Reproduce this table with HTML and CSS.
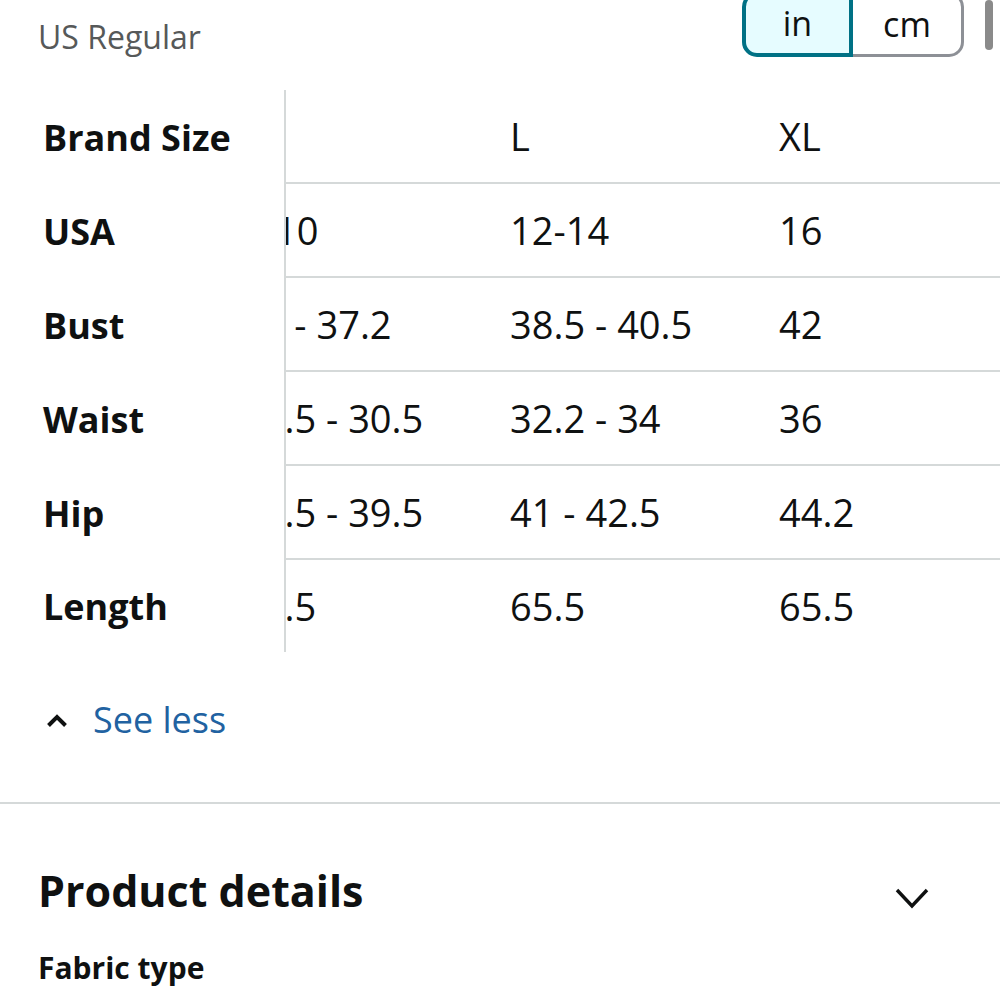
FILE: index.html
```html
<!DOCTYPE html>
<html lang="en">
  <head>
    <meta charset="UTF-8" />
    <meta name="viewport" content="width=device-width, initial-scale=1.0" />
    <title>Size chart</title>
    <link rel="stylesheet" href="styles.css">
  </head>
  <body>
    <div class="unit-bar">
      <span class="unit-label">US Regular</span>
      <div class="unit-toggle">
        <span class="unit selected">in</span>
        <span class="unit">cm</span>
      </div>
      <span class="scroll-thumb"></span>
    </div>

    <div class="size-table">
      <div class="size-row">
        <div class="size-label">Brand Size</div>
        <div class="size-values">
          <div class="size-track">
            <span class="size-cell">M</span>
            <span class="size-cell">L</span>
            <span class="size-cell">XL</span>
          </div>
        </div>
      </div>
      <div class="size-row">
        <div class="size-label">USA</div>
        <div class="size-values">
          <div class="size-track">
            <span class="size-cell">8-10</span>
            <span class="size-cell">12-14</span>
            <span class="size-cell">16</span>
          </div>
        </div>
      </div>
      <div class="size-row">
        <div class="size-label">Bust</div>
        <div class="size-values">
          <div class="size-track">
            <span class="size-cell">36 - 37.2</span>
            <span class="size-cell">38.5 - 40.5</span>
            <span class="size-cell">42</span>
          </div>
        </div>
      </div>
      <div class="size-row">
        <div class="size-label">Waist</div>
        <div class="size-values">
          <div class="size-track">
            <span class="size-cell">28.5 - 30.5</span>
            <span class="size-cell">32.2 - 34</span>
            <span class="size-cell">36</span>
          </div>
        </div>
      </div>
      <div class="size-row">
        <div class="size-label">Hip</div>
        <div class="size-values">
          <div class="size-track">
            <span class="size-cell">37.5 - 39.5</span>
            <span class="size-cell">41 - 42.5</span>
            <span class="size-cell">44.2</span>
          </div>
        </div>
      </div>
      <div class="size-row">
        <div class="size-label">Length</div>
        <div class="size-values">
          <div class="size-track">
            <span class="size-cell">64.5</span>
            <span class="size-cell">65.5</span>
            <span class="size-cell">65.5</span>
          </div>
        </div>
      </div>
    </div>

    <div class="see-less">
      <a class="see-less-link" href="#">
        <svg class="chevron-up" width="20" height="16" viewBox="0 0 20 16">
          <path d="M1.5 13.5 L10 5 L18.5 13.5" fill="none" stroke="#0f1111" stroke-width="4" />
        </svg>
        <span>See less</span>
      </a>
    </div>

    <div class="details">
      <div class="details-head">
        <h2>Product details</h2>
        <svg class="chevron-down" width="36" height="24" viewBox="0 0 36 24">
          <path d="M3 4 L18 20 L33 4" fill="none" stroke="#0f1111" stroke-width="3.4" />
        </svg>
      </div>
      <h3>Fabric type</h3>
    </div>
  </body>
</html>
```

FILE: styles.css
```css
body {
  margin: 0;
  padding: 0;
  background: #fff;
  color: #0f1111;
  font-family: "Open Sans", sans-serif;
  overflow: hidden;
}

.unit-bar {
  display: flex;
  align-items: flex-start;
  height: 90px;
  padding-left: 38px;
}

.unit-label {
  margin-top: 17px;
  font-size: 32px;
  line-height: 40px;
  color: #565959;
  flex: 1;
}

.unit-toggle {
  display: flex;
  margin-top: -8px;
  height: 65px;
}

.unit {
  width: 111px;
  box-sizing: border-box;
  display: flex;
  align-items: center;
  justify-content: center;
  font-size: 34px;
  border: 3px solid #8d9096;
  border-left: none;
  border-radius: 0 15px 15px 0;
  padding-bottom: 2px;
}

.unit.selected {
  background: #e6fcff;
  border: 3px solid #007185;
  border-width: 3px 4px 4px 4px;
  border-radius: 15px 0 0 15px;
}

.scroll-thumb {
  width: 8px;
  height: 50px;
  margin: 0 7px 0 21px;
  border-radius: 4px;
  background: #8a8a8a;
}

.size-row {
  display: flex;
  height: 94px;
}

.size-row:last-child {
  height: 92px;
}

.size-label {
  width: 286px;
  flex: none;
  box-sizing: border-box;
  padding-left: 43px;
  border-right: 2px solid #d5d9d9;
  display: flex;
  align-items: center;
  font-size: 36px;
  font-weight: 700;
}

.size-values {
  flex: 1;
  overflow: hidden;
  display: flex;
  align-items: center;
  border-bottom: 2px solid #d5d9d9;
}

.size-row:last-child .size-values {
  border-bottom: none;
}

.size-track {
  display: flex;
  margin-left: -45px;
}

.size-cell {
  width: 269px;
  flex: none;
  white-space: nowrap;
  font-size: 38px;
  line-height: 48px;
}

.see-less {
  height: 152px;
  box-sizing: border-box;
  padding: 44px 0 0 47px;
  border-bottom: 2px solid #d5d9d9;
}

.see-less-link {
  display: flex;
  align-items: center;
  gap: 26px;
  color: #2162a1;
  text-decoration: none;
  font-size: 36px;
  line-height: 48px;
}

.details {
  padding: 60px 0 0 38px;
}

.details-head {
  display: flex;
  align-items: center;
  justify-content: space-between;
  padding-right: 70px;
}

.details h2 {
  margin: 0;
  font-size: 43px;
  line-height: 54px;
  font-weight: 700;
}

.chevron-down {
  margin-top: 14px;
}

.details h3 {
  margin: 30px 0 0;
  font-size: 30px;
  line-height: 40px;
  font-weight: 700;
}
```
